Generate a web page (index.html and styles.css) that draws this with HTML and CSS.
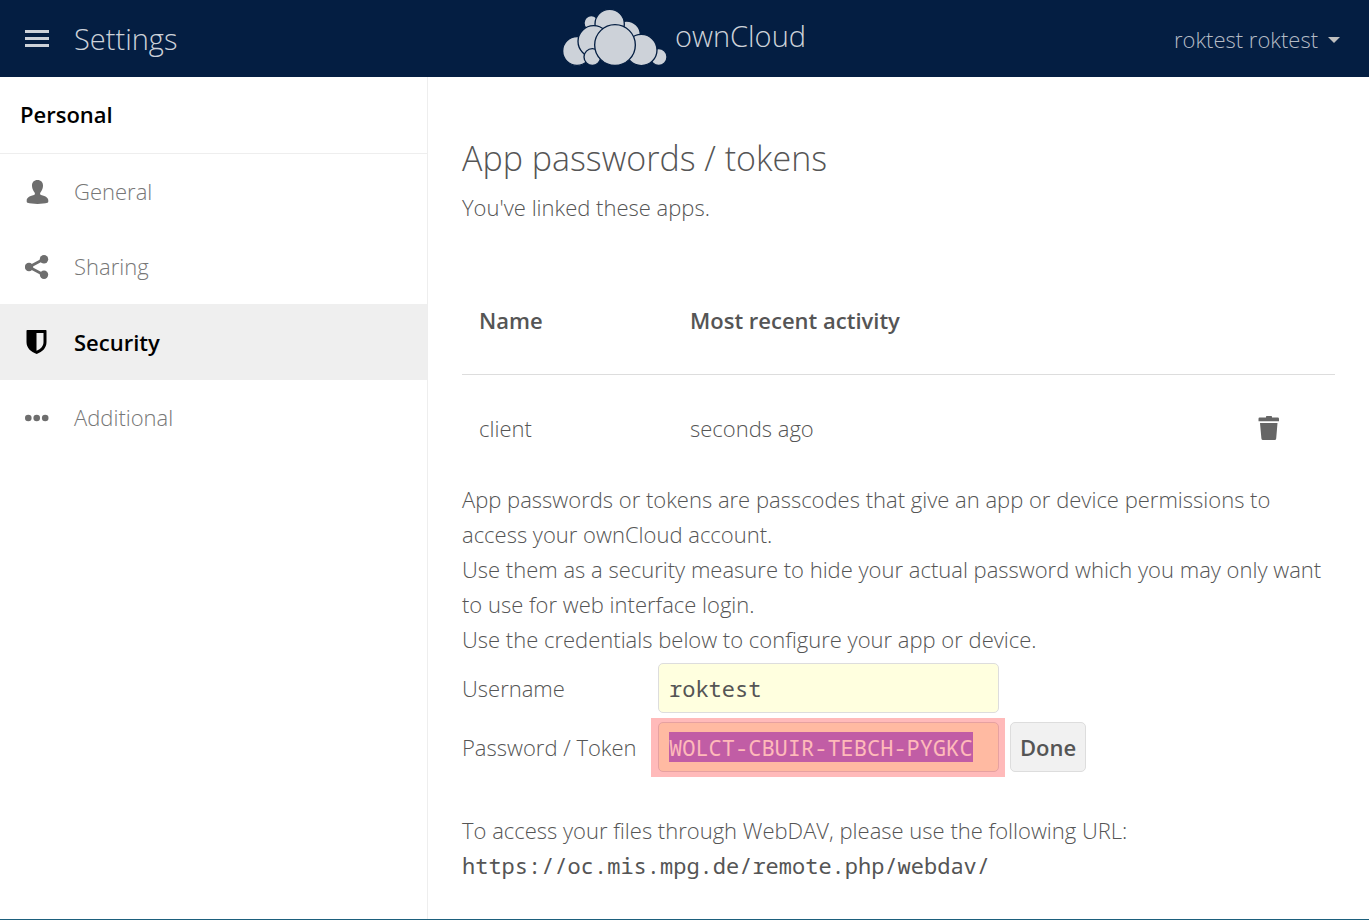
FILE: index.html
```html
<!DOCTYPE html>
<html lang="en">
<head>
<meta charset="utf-8">
<meta name="viewport" content="width=device-width, initial-scale=1">
<title>Settings - ownCloud</title>
<link rel="stylesheet" href="styles.css">
</head>
<body>
<header class="topbar">
  <div class="topbar-left">
    <button class="menu-button" type="button" aria-label="Menu"><svg width="24" height="17" viewBox="0 0 24 17" fill="#cdd2d9"><path d="M0 0h24v3H0zM0 7h24v3H0zM0 14h24v3H0z"/></svg></button>
    <span class="app-name">Settings</span>
  </div>
  <a class="brand" href="#">
    <svg width="104" height="57" viewBox="41 28 312 171" fill="#cdd2d9" stroke="#041e42" stroke-width="4" aria-hidden="true">
      <circle cx="83" cy="154" r="43"/>
      <circle cx="328" cy="172" r="25"/>
      <circle cx="126" cy="70" r="22"/>
      <circle cx="232" cy="105" r="41"/>
      <circle cx="181" cy="73" r="44"/>
      <circle cx="133" cy="125" r="47"/>
      <circle cx="276" cy="151" r="47"/>
      <circle cx="129" cy="172" r="25"/>
      <circle cx="197" cy="136" r="61"/>
    </svg>
    <span>ownCloud</span>
  </a>
  <button class="user-menu" type="button">roktest roktest
    <svg width="12" height="6" viewBox="0 0 12 6" fill="#c0c0c0"><path d="M0 0h12L6 6z"/></svg>
  </button>
</header>
<div class="layout">
  <nav class="sidebar">
    <h2 class="sidebar-title">Personal</h2>
    <a class="nav-item" href="#"><svg width="24" height="24" viewBox="0 0 24 24" fill="#6e6e6e"><path d="M12.500 0C8.800 0 6.800 2.600 7 6c.2 2.800 1.200 4.700 2.400 6.200.8 1.100.7 2.500-.4 2.900-5 1.100-7.300 3-7.300 5.400 0 1.400 0 1.900.8 2.300 4.500 1.500 15.500 1.500 20 0 .8-.4.800-.9.800-2.300 0-2.400-2.300-4.300-7.300-5.400-1.100-.4-1.200-1.800-.4-2.900C16.800 10.700 17.800 8.800 18 6c.2-3.400-1.800-6-5.500-6z"/></svg>General</a>
    <a class="nav-item" href="#"><svg width="24" height="24" viewBox="0 0 24 24" fill="#6e6e6e"><path d="M4 12l15-8M4 12l15 8" stroke="#6e6e6e" stroke-width="2.600"/><circle cx="4" cy="12" r="4.200"/><circle cx="19" cy="4.300" r="4.200"/><circle cx="19" cy="19.700" r="4.200"/></svg>Sharing</a>
    <a class="nav-item active" href="#"><svg width="24" height="24" viewBox="0 0 24 24" fill="#000"><path fill-rule="evenodd" d="M2.300 0h18.500q.7 0 .7.700V12c0 6-4 9.700-9.800 12C5.700 21.700 1.500 18 1.500 12V.7Q1.500 0 2.300 0zM11.500 3v17.800c4.500-2 7-4.800 7-8.800V3z"/></svg>Security</a>
    <a class="nav-item" href="#"><svg width="24" height="24" viewBox="0 0 24 24" fill="#6e6e6e"><circle cx="3.300" cy="12" r="3.300"/><circle cx="11.700" cy="12" r="3.300"/><circle cx="20.200" cy="12" r="3.300"/></svg>Additional</a>
  </nav>
  <main class="content">
    <h1>App passwords / tokens</h1>
    <p>You've linked these apps.</p>
    <table class="apps">
      <thead><tr><th class="col-name">Name</th><th>Most recent activity</th><th class="col-action"></th></tr></thead>
      <tbody><tr><td>client</td><td>seconds ago</td><td class="col-action"><button class="delete" type="button" aria-label="Delete"><svg width="22" height="26" viewBox="0 0 22 26" fill="#666"><path d="M8 2.500V1.700Q8 1 8.700 1h4.600q.7 0 .7.700v.8h5.800q1.200 0 1.200 1.200V6.200H0.500V3.700q0-1.200 1.200-1.200zM2 8h17.500l-1.300 15.500Q18 25 16.700 25H5Q3.600 25 3.400 23.500z"/></svg></button></td></tr></tbody>
    </table>
    <p>App passwords or tokens are passcodes that give an app or device permissions to access your ownCloud account.<br>Use them as a security measure to hide your actual password which you may only want to use for web interface login.<br>Use the credentials below to configure your app or device.</p>
    <form class="credentials">
      <label for="username">Username</label>
      <span class="field"><input id="username" type="text" value="roktest" readonly></span>
      <label for="token">Password / Token</label>
      <span class="field marked"><input id="token" type="text" value="WOLCT-CBUIR-TEBCH-PYGKC" readonly></span>
      <button class="done" type="button">Done</button>
    </form>
    <p class="webdav">To access your files through WebDAV, please use the following URL:<br><code>https://oc.mis.mpg.de/remote.php/webdav/</code></p>
  </main>
</div>
<script src="script.js"></script>
</body>
</html>
```
FILE: styles.css
```css
* { box-sizing: border-box; }
body {
  margin: 0;
  min-height: 100vh;
  display: flex;
  flex-direction: column;
  border-bottom: 1px solid #1d607d;
  background: #fff;
  color: #555;
  font: 300 22px/35px "Open Sans", sans-serif;
}
button { border: 0; padding: 0; background: none; color: inherit; font: inherit; }
a { color: inherit; text-decoration: none; }
svg { display: block; flex: none; }
p, h1, h2 { margin: 0; }
.topbar {
  height: 77px;
  display: grid;
  grid-template-columns: 1fr auto 1fr;
  align-items: center;
  padding: 0 25px;
  background: #041e42;
  color: #cdd2d9;
}
.topbar-left { display: flex; align-items: center; gap: 25px; }
.app-name { font-size: 29px; line-height: 40px; }
.brand { display: flex; align-items: center; gap: 8px; padding-bottom: 2px; font-size: 29px; }
.brand span { padding-bottom: 4px; }
.user-menu { justify-self: end; display: flex; align-items: center; gap: 10px; padding: 2px 4px 0 0; color: #b4bbc5; }
.layout { flex: 1; display: flex; }
.sidebar { flex: 0 0 428px; border-right: 1px solid #eee; }
.sidebar-title {
  height: 77px;
  padding: 20px;
  border-bottom: 1px solid #eee;
  color: #000;
  font-size: 22px;
  line-height: 35px;
  font-weight: 600;
}
.nav-item { display: flex; align-items: center; gap: 25px; height: 75px; padding-left: 25px; color: #777; }
.nav-item.active { height: 76px; background: #efefef; color: #000; font-weight: 600; }
.content { flex: 1; min-width: 0; padding: 58px 34px 34px; }
h1 { margin-bottom: 9px; font-size: 34px; line-height: 46px; font-weight: 300; }
.apps { width: 100%; margin-top: 42px; border-collapse: collapse; }
.apps th, .apps td { height: 108px; padding: 0 17px; text-align: left; }
.apps th { height: 107px; border-bottom: 1px solid #ddd; font-weight: 600; }
.apps .col-name { width: 211px; }
.apps .col-action { width: 94px; }
.delete { display: block; }
.credentials {
  display: grid;
  grid-template-columns: 185px 341px auto;
  column-gap: 11px;
  row-gap: 9px;
  align-items: center;
  justify-content: start;
  margin-top: 6px;
}
.field { position: relative; }
.credentials input {
  display: block;
  width: 100%;
  height: 50px;
  padding: 0 10px;
  border: 1px solid #ddd;
  border-radius: 5px;
  outline: 0;
  background: #ffffdf;
  color: #555;
  font: 22px/27px "Noto Sans Mono", "DejaVu Sans Mono", monospace;
}
.credentials label:nth-of-type(2) { grid-column: 1; }
.marked::after {
  content: "";
  position: absolute;
  inset: -4px -6px -5px -7px;
  background: rgba(255, 0, 0, 0.27);
  pointer-events: none;
}
.marked ::selection { background: rgba(170, 127, 227, 0.996); color: #fff; }
.done {
  height: 50px;
  padding: 0 9px;
  border: 1px solid #ddd;
  border-radius: 5px;
  background: #f1f1f1;
  font-weight: 600;
}
.webdav { margin-top: 41px; }
code { font: 22px/35px "Noto Sans Mono", "DejaVu Sans Mono", monospace; }
```
FILE: script.js
```js
const token = document.getElementById("token");
token.focus();
token.select();
```
